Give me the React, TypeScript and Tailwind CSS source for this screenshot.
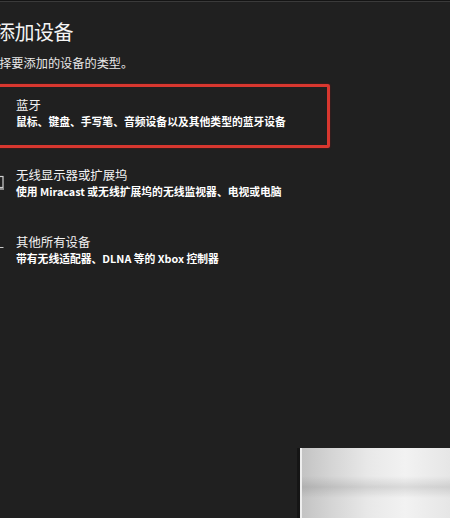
import React from "react";

const font = { fontFamily: '"Noto Sans CJK SC", "Noto Sans", sans-serif' };

function Row({
  icon,
  title,
  desc,
  className,
}: {
  icon: React.ReactNode;
  title: string;
  desc: string;
  className: string;
}) {
  return (
    <div className={"flex items-start gap-[12px] -ml-[16px] " + className}>
      <div className="w-[20px] h-[32px] flex items-center">{icon}</div>
      <div className="flex flex-col">
        <div className="text-[12.4px] leading-[16px] text-[#f2f2f2] whitespace-nowrap">{title}</div>
        <div className="text-[10.8px] leading-[16px] font-bold text-white whitespace-nowrap">{desc}</div>
      </div>
    </div>
  );
}

export default function App() {
  return (
    <div
      className="relative w-[450px] h-[518px] overflow-hidden bg-[#202020] border-t border-[#141414]"
      style={font}
    >
      <div className="h-[1px] bg-[#3a3a3a]" />
      <div className="flex flex-col">
        <div className="mt-[16px] -ml-[5px] text-[20px] leading-[28px] tracking-[-0.5px] text-[#f4f4f4] whitespace-nowrap">
          添加设备
        </div>
        <div className="mt-[9px] -ml-[13px] text-[12.2px] leading-[17px] text-[#e8e8e8] whitespace-nowrap">
          选择要添加的设备的类型。
        </div>
        <Row
          className="mt-[25px]"
          title="蓝牙"
          desc="鼠标、键盘、手写笔、音频设备以及其他类型的蓝牙设备"
          icon={
            <svg width="20" height="20" viewBox="0 0 20 20" fill="none" stroke="#dcdcdc" strokeWidth="1">
              <path d="M6 6l8 8-4 4V2l4 4-8 8" />
            </svg>
          }
        />
        <Row
          className="mt-[38px]"
          title="无线显示器或扩展坞"
          desc="使用 Miracast 或无线扩展坞的无线监视器、电视或电脑"
          icon={
            <svg width="20" height="20" viewBox="0 0 20 20" fill="none" stroke="#d0d0d0" strokeWidth="1.2">
              <rect x="1" y="3.5" width="18" height="11" />
              <path d="M14 16h6" />
            </svg>
          }
        />
        <Row
          className="mt-[35px]"
          title="其他所有设备"
          desc="带有无线适配器、DLNA 等的 Xbox 控制器"
          icon={
            <svg width="20" height="20" viewBox="0 0 20 20" fill="none" stroke="#c8c8c8" strokeWidth="1">
              <path d="M2 7.5h17.5" />
            </svg>
          }
        />
      </div>

      {/* red highlight annotation */}
      <div className="absolute left-[-10px] top-[83px] w-[340px] h-[64px] border-[3px] border-[#d8372f] rounded-[2px] shadow-[0_0_2px_rgba(120,20,20,0.8)]" />

      {/* blurred watermark patch */}
      <div className="absolute left-[297px] top-[447px] right-0 bottom-0 border-l-[3px] border-[#151515] bg-[linear-gradient(90deg,#c2c2c2_0%,#d4d4d4_20%,#e8e8e8_45%,#f2f2f2_70%,#e6e6e6_100%)]">
        <div className="absolute left-0 right-0 top-[28px] h-[22px] bg-[linear-gradient(180deg,rgba(0,0,0,0)_0%,rgba(0,0,0,0.1)_50%,rgba(0,0,0,0)_100%)]" />
        <div className="absolute left-0 top-0 bottom-0 w-[2px] bg-[#eeeeee]" />
      </div>
    </div>
  );
}
